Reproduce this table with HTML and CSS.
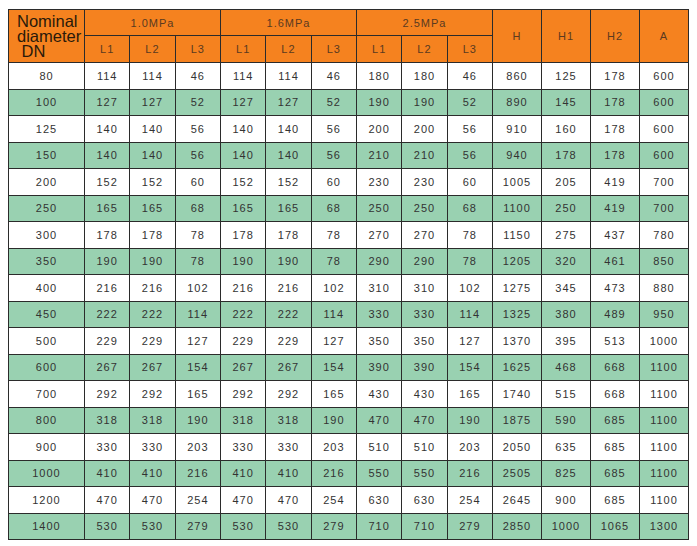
FILE: index.html
```html
<!DOCTYPE html>
<html>
<head>
<meta charset="utf-8">
<link rel="stylesheet" href="styles.css">
</head>
<body>
<table class="spec">
  <colgroup>
    <col class="c-dn">
    <col class="c-l"><col class="c-l"><col class="c-l">
    <col class="c-l"><col class="c-l"><col class="c-l">
    <col class="c-l"><col class="c-l"><col class="c-l">
    <col class="c-h"><col class="c-h"><col class="c-h"><col class="c-h">
  </colgroup>
  <thead>
    <tr class="h1">
      <th rowspan="2" class="dn-head">Nominal<br>diameter<br>&nbsp;DN</th>
      <th colspan="3">1.0MPa</th>
      <th colspan="3">1.6MPa</th>
      <th colspan="3">2.5MPa</th>
      <th rowspan="2">H</th>
      <th rowspan="2">H1</th>
      <th rowspan="2">H2</th>
      <th rowspan="2">A</th>
    </tr>
    <tr class="h2">
      <th>L1</th><th>L2</th><th>L3</th>
      <th>L1</th><th>L2</th><th>L3</th>
      <th>L1</th><th>L2</th><th>L3</th>
    </tr>
  </thead>
  <tbody>
    <tr><td>80</td><td>114</td><td>114</td><td>46</td><td>114</td><td>114</td><td>46</td><td>180</td><td>180</td><td>46</td><td>860</td><td>125</td><td>178</td><td>600</td></tr>
    <tr class="g"><td>100</td><td>127</td><td>127</td><td>52</td><td>127</td><td>127</td><td>52</td><td>190</td><td>190</td><td>52</td><td>890</td><td>145</td><td>178</td><td>600</td></tr>
    <tr><td>125</td><td>140</td><td>140</td><td>56</td><td>140</td><td>140</td><td>56</td><td>200</td><td>200</td><td>56</td><td>910</td><td>160</td><td>178</td><td>600</td></tr>
    <tr class="g"><td>150</td><td>140</td><td>140</td><td>56</td><td>140</td><td>140</td><td>56</td><td>210</td><td>210</td><td>56</td><td>940</td><td>178</td><td>178</td><td>600</td></tr>
    <tr><td>200</td><td>152</td><td>152</td><td>60</td><td>152</td><td>152</td><td>60</td><td>230</td><td>230</td><td>60</td><td>1005</td><td>205</td><td>419</td><td>700</td></tr>
    <tr class="g"><td>250</td><td>165</td><td>165</td><td>68</td><td>165</td><td>165</td><td>68</td><td>250</td><td>250</td><td>68</td><td>1100</td><td>250</td><td>419</td><td>700</td></tr>
    <tr><td>300</td><td>178</td><td>178</td><td>78</td><td>178</td><td>178</td><td>78</td><td>270</td><td>270</td><td>78</td><td>1150</td><td>275</td><td>437</td><td>780</td></tr>
    <tr class="g"><td>350</td><td>190</td><td>190</td><td>78</td><td>190</td><td>190</td><td>78</td><td>290</td><td>290</td><td>78</td><td>1205</td><td>320</td><td>461</td><td>850</td></tr>
    <tr><td>400</td><td>216</td><td>216</td><td>102</td><td>216</td><td>216</td><td>102</td><td>310</td><td>310</td><td>102</td><td>1275</td><td>345</td><td>473</td><td>880</td></tr>
    <tr class="g"><td>450</td><td>222</td><td>222</td><td>114</td><td>222</td><td>222</td><td>114</td><td>330</td><td>330</td><td>114</td><td>1325</td><td>380</td><td>489</td><td>950</td></tr>
    <tr><td>500</td><td>229</td><td>229</td><td>127</td><td>229</td><td>229</td><td>127</td><td>350</td><td>350</td><td>127</td><td>1370</td><td>395</td><td>513</td><td>1000</td></tr>
    <tr class="g"><td>600</td><td>267</td><td>267</td><td>154</td><td>267</td><td>267</td><td>154</td><td>390</td><td>390</td><td>154</td><td>1625</td><td>468</td><td>668</td><td>1100</td></tr>
    <tr><td>700</td><td>292</td><td>292</td><td>165</td><td>292</td><td>292</td><td>165</td><td>430</td><td>430</td><td>165</td><td>1740</td><td>515</td><td>668</td><td>1100</td></tr>
    <tr class="g"><td>800</td><td>318</td><td>318</td><td>190</td><td>318</td><td>318</td><td>190</td><td>470</td><td>470</td><td>190</td><td>1875</td><td>590</td><td>685</td><td>1100</td></tr>
    <tr><td>900</td><td>330</td><td>330</td><td>203</td><td>330</td><td>330</td><td>203</td><td>510</td><td>510</td><td>203</td><td>2050</td><td>635</td><td>685</td><td>1100</td></tr>
    <tr class="g"><td>1000</td><td>410</td><td>410</td><td>216</td><td>410</td><td>410</td><td>216</td><td>550</td><td>550</td><td>216</td><td>2505</td><td>825</td><td>685</td><td>1100</td></tr>
    <tr><td>1200</td><td>470</td><td>470</td><td>254</td><td>470</td><td>470</td><td>254</td><td>630</td><td>630</td><td>254</td><td>2645</td><td>900</td><td>685</td><td>1100</td></tr>
    <tr class="g"><td>1400</td><td>530</td><td>530</td><td>279</td><td>530</td><td>530</td><td>279</td><td>710</td><td>710</td><td>279</td><td>2850</td><td>1000</td><td>1065</td><td>1300</td></tr>
  </tbody>
</table>
</body>
</html>
```

FILE: styles.css
```css
html, body {
  margin: 0;
  padding: 0;
  background: #ffffff;
}
body {
  padding: 9px 0 0 8px;
}
.spec {
  border-collapse: collapse;
  table-layout: fixed;
  width: 681px;
  font-family: "Liberation Sans", Arial, sans-serif;
  font-size: 11px;
  color: #333333;
  letter-spacing: 1px;
}
.c-dn { width: 76px; }
.c-l { width: 45.33px; }
.c-h { width: 49px; }
.spec th,
.spec td {
  border: 1px solid #2b2b2b;
  text-align: center;
  padding: 0;
}
.spec th {
  background: #f5821f;
  color: #5a3a20;
  font-weight: normal;
}
.h1 th { height: 25px; }
.h2 th { height: 26px; }
.spec td {
  height: 25.5px;
  background: #ffffff;
}
.spec tr.g td {
  background: #99d1b1;
}
.spec th.dn-head {
  text-align: left;
  padding-left: 8px;
  font-size: 16.5px;
  line-height: 15px;
  letter-spacing: 0;
  color: #2a1a0a;
}
```
